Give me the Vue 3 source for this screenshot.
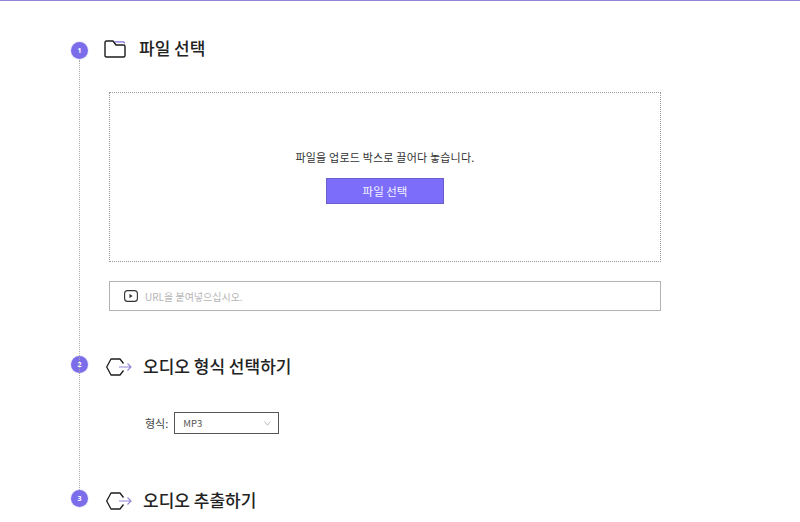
<script setup>
const formats = ['MP3', 'WAV', 'AAC']
</script>

<template>
  <div class="page">
    <div class="steps">
      <div class="rail"></div>

      <section class="step step-one">
        <div class="step-head">
          <span class="num">1</span>
          <svg class="icon-folder" width="22" height="18" viewBox="0 0 22 18" fill="none">
            <path d="M10.5 1.8 H19 Q20.6 1.8 20.6 3.4" stroke="#7d6fe0" stroke-width="1.2" />
            <path d="M1 2.5 Q1 1 2.5 1 H9 L12 5 H19.5 Q21 5 21 6.5 V15.5 Q21 17 19.5 17 H2.5 Q1 17 1 15.5 Z" stroke="#1c1c1c" stroke-width="1.4" stroke-linejoin="round" />
          </svg>
          <h2 class="title">파일 선택</h2>
        </div>

        <div class="dropzone">
          <p class="drop-text">파일을 업로드 박스로 끌어다 놓습니다.</p>
          <button type="button" class="pick-btn">파일 선택</button>
        </div>

        <div class="url-box">
          <svg width="14" height="12" viewBox="0 0 14 12" fill="none">
            <rect x="0.6" y="0.6" width="12.8" height="10.8" rx="3" stroke="#333" stroke-width="1.1" />
            <path d="M5.5 3.8 L8.6 6 L5.5 8.2 Z" fill="#333" />
          </svg>
          <span class="url-hint">URL을 붙여넣으십시오.</span>
        </div>
      </section>

      <section class="step step-two">
        <div class="step-head">
          <span class="num">2</span>
          <svg class="icon-hex" width="26" height="18" viewBox="0 0 26 18" fill="none">
            <path d="M17.5 5.5 L14 1 H5 L0.7 9 L5 17 H14 L17.5 12.5" stroke="#1c1c1c" stroke-width="1.3" stroke-linejoin="round" />
            <path d="M13 9 H25 M21.5 5.5 L25 9 L21.5 12.5" stroke="#8f85d8" stroke-width="1.1" />
          </svg>
          <h2 class="title">오디오 형식 선택하기</h2>
        </div>

        <div class="format-row">
          <span class="format-label">형식:</span>
          <div class="select">
            <span>{{ formats[0] }}</span>
            <svg width="7" height="5" viewBox="0 0 7 5" fill="none">
              <path d="M0.5 0.5 L3.5 4.2 L6.5 0.5" stroke="#b5b5b5" stroke-width="0.9" />
            </svg>
          </div>
        </div>
      </section>

      <section class="step step-three">
        <div class="step-head">
          <span class="num">3</span>
          <svg class="icon-hex" width="26" height="18" viewBox="0 0 26 18" fill="none">
            <path d="M17.5 5.5 L14 1 H5 L0.7 9 L5 17 H14 L17.5 12.5" stroke="#1c1c1c" stroke-width="1.3" stroke-linejoin="round" />
            <path d="M13 9 H25 M21.5 5.5 L25 9 L21.5 12.5" stroke="#8f85d8" stroke-width="1.1" />
          </svg>
          <h2 class="title">오디오 추출하기</h2>
        </div>
      </section>
    </div>
  </div>
</template>

<style>
html, body { margin: 0; background: #fff; overflow: hidden; }
</style>

<style scoped>
.page {
  height: 522px;
  box-sizing: border-box;
  border-top: 1px solid #8f85dc;
  font-family: "Noto Sans CJK KR", "Noto Sans", sans-serif;
  color: #222;
  overflow: hidden;
}
.steps { position: relative; margin-left: 71px; width: 590px; padding-top: 36px; }
.rail {
  position: absolute;
  left: 8px;
  top: 59px;
  height: 430px;
  border-left: 1px dotted #aaa;
}
.step-head { display: flex; align-items: center; height: 22px; }
.num {
  width: 17px;
  height: 17px;
  border-radius: 50%;
  background: #7b6cea;
  box-shadow: 0 0 0 1px #efedfb;
  color: #fff;
  font-family: "Open Sans", sans-serif;
  font-size: 7px;
  font-weight: 700;
  line-height: 17px;
  text-align: center;
  flex: none;
  margin-top: -4px;
}
.step-one .num { margin-top: 4px; }
.icon-folder { margin: 2px 13px 0 16px; flex: none; }
.icon-hex { margin: 1px 11px 0 18px; flex: none; }
.title { margin: 0; font-size: 17px; font-weight: 500; color: #222; line-height: 22px; }

.dropzone {
  margin: 33px 0 0 38px;
  height: 170px;
  box-sizing: border-box;
  border: 1px dotted #999;
  display: flex;
  flex-direction: column;
  align-items: center;
  padding-top: 56px;
}
.drop-text { margin: 0; font-size: 11px; letter-spacing: 0.2px; line-height: 16px; color: #333; }
.pick-btn {
  margin-top: 13px;
  width: 118px;
  height: 26px;
  border: 1px solid #6a5fc8;
  background: #7c6dfb;
  color: #f4f2ff;
  font-family: inherit;
  font-size: 11.5px;
  padding: 0;
}
.url-box {
  margin: 19px 0 0 38px;
  height: 30px;
  box-sizing: border-box;
  border: 1px solid #b4b4b4;
  display: flex;
  align-items: center;
  padding-left: 14px;
  gap: 7px;
}
.url-hint { font-size: 10px; color: #b5b5b5; }

.step-two { margin-top: 44px; }
.format-row { display: flex; align-items: center; margin: 35px 0 0 74px; }
.format-label { font-size: 11px; color: #444; margin-right: 6px; }
.select {
  width: 105px;
  height: 22px;
  box-sizing: border-box;
  border: 1px solid #555;
  display: flex;
  align-items: center;
  justify-content: space-between;
  padding: 0 7px 0 8px;
  font-size: 9.5px;
  color: #555;
}
.step-three { margin-top: 55px; }
</style>
